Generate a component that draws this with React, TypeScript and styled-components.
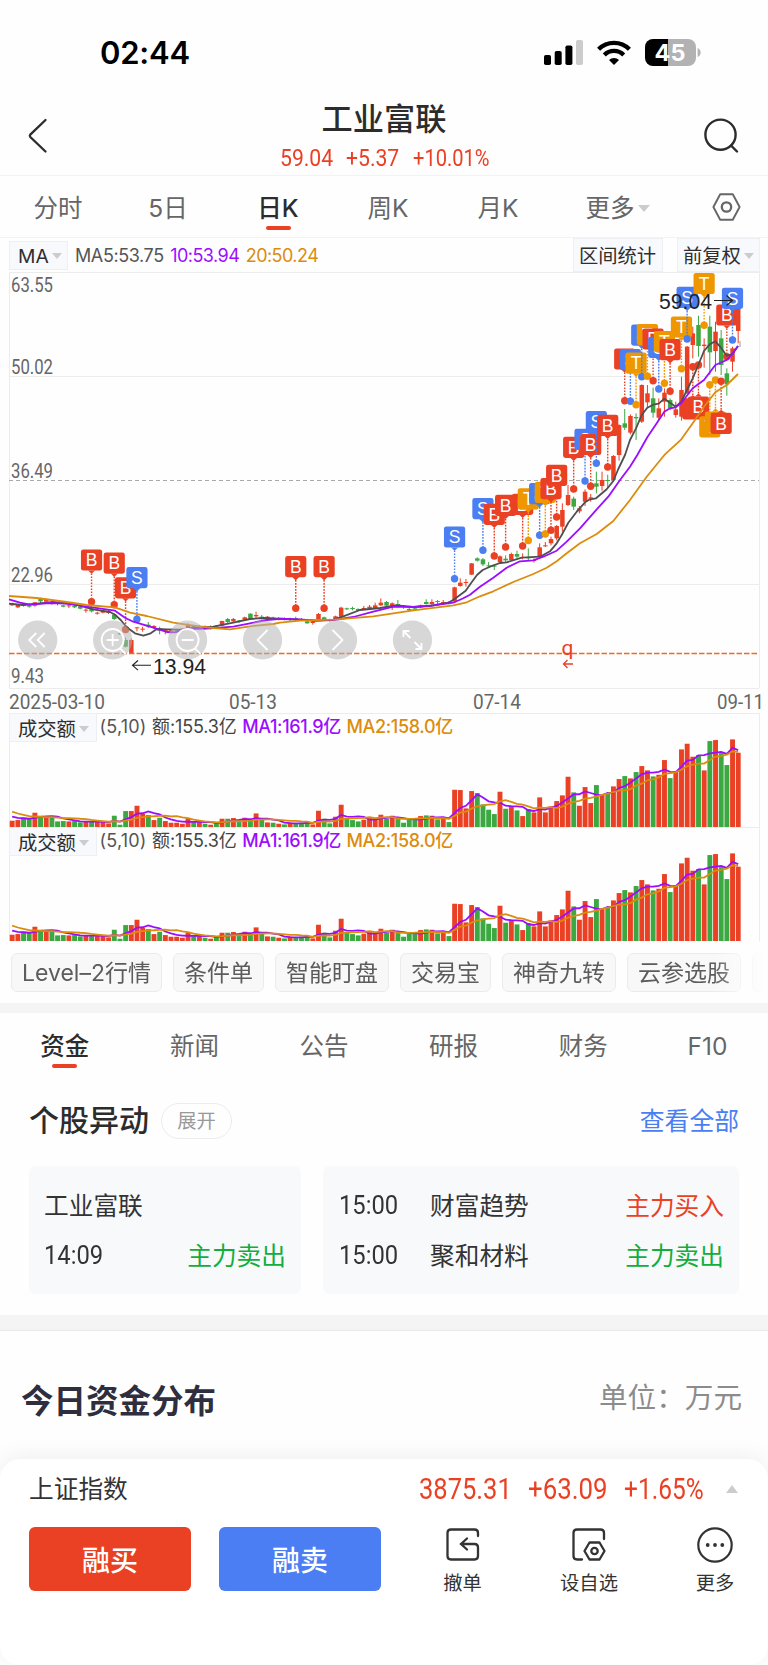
import React from 'react';
import styled, { createGlobalStyle } from 'styled-components';

const RED = '#ea4024';
const GREEN = '#3ca842';
const BLUE = '#4a7ef2';
const AMBER = '#ee9700';
const PURPLE = '#9b0dff';
const GOLD = '#dc8c0c';
const DARK = '#4f4f4f';
const UI = `"Inter", "Noto Sans CJK SC", sans-serif`;
const NUM = `"Roboto", "Noto Sans CJK SC", sans-serif`;

const Global = createGlobalStyle`
  * { box-sizing: border-box; }
  body { margin: 0; background: #fefefe; font-family: ${UI}; color: #333; }
  svg { display: block; }
`;

const Screen = styled.div`
  width: 768px;
  height: 1665px;
  overflow: hidden;
  background: #fefefe;
  display: flex;
  flex-direction: column;
`;

const StatusBar = styled.div`
  height: 104px;
  flex: none;
  display: flex;
  align-items: center;
  justify-content: space-between;
  padding: 0 67px 0 100px;
`;
const Clock = styled.div`
  font-size: 31px;
  font-weight: 600;
  color: #000;
  letter-spacing: -0.2px;
`;
const StatusIcons = styled.div`
  display: flex;
  align-items: center;
  gap: 14px;
`;

const Header = styled.header`
  height: 72px;
  flex: none;
  display: grid;
  grid-template-columns: 120px 1fr 120px;
  border-bottom: 1px solid #f3f3f3;
`;
const BackCell = styled.div`
  padding: 14px 0 0 27px;
`;
const SearchCell = styled.div`
  padding: 13px 0 0 55px;
`;
const TitleBlock = styled.div`
  display: flex;
  flex-direction: column;
  align-items: center;
`;
const StockName = styled.div`
  font-size: 31.2px;
  line-height: 30px;
  font-weight: 500;
  color: #2c2c2c;
`;
const QuoteRow = styled.div`
  display: flex;
  gap: 14px;
  margin-top: 9px;
  height: 30px;
  align-items: center;
  color: ${RED};
`;
const Num = styled.span<{ $w: number; $size: number; $scale: number; $weight?: number }>`
  display: block;
  width: ${(p) => p.$w}px;
  font-family: ${NUM};
  font-size: ${(p) => p.$size}px;
  font-weight: ${(p) => p.$weight ?? 400};
  line-height: 30px;
  white-space: nowrap;
  transform: scaleX(${(p) => p.$scale});
  transform-origin: 0 50%;
`;

const PeriodTabs = styled.nav`
  height: 62px;
  flex: none;
  display: flex;
  padding-left: 3px;
  border-bottom: 1px solid #f3f3f3;
`;
const Tab = styled.div<{ $w: number; $active?: boolean; $top: number; $bar: number }>`
  width: ${(p) => p.$w}px;
  flex: none;
  display: flex;
  flex-direction: column;
  align-items: center;
  font-size: 24.5px;
  line-height: 36px;
  padding-top: ${(p) => p.$top}px;
  font-weight: ${(p) => (p.$active ? 500 : 400)};
  color: ${(p) => (p.$active ? '#2c2c2c' : '#666')};
  &::after {
    content: '';
    width: 25px;
    height: 4px;
    border-radius: 2px;
    margin-top: ${(p) => p.$bar}px;
    background: ${(p) => (p.$active ? RED : 'transparent')};
  }
`;
const TabLabel = styled.span`
  display: flex;
  align-items: center;
  gap: 3px;
`;
const Caret = styled.i<{ $size?: number; $up?: boolean }>`
  width: 0;
  height: 0;
  border: ${(p) => p.$size ?? 5}px solid transparent;
  border-bottom-width: ${(p) => (p.$up ? 8 : 0)}px;
  border-top-width: ${(p) => (p.$up ? 0 : (p.$size ?? 5) + 1)}px;
  border-top-color: ${(p) => (p.$up ? 'transparent' : '#ccc')};
  border-bottom-color: ${(p) => (p.$up ? '#ccc' : 'transparent')};
`;
const SettingsCell = styled.div`
  flex: 1;
  display: flex;
  justify-content: center;
  padding: 17px 0 0 2px;
`;

const IndicatorRow = styled.div`
  height: 34px;
  flex: none;
  display: flex;
  align-items: center;
  padding: 0 8px 0 9px;
`;
const SelectBox = styled.div<{ $w: number; $h: number; $left: number }>`
  width: ${(p) => p.$w}px;
  height: ${(p) => p.$h}px;
  flex: none;
  display: flex;
  align-items: center;
  gap: 3px;
  padding: 2px 0 0 ${(p) => p.$left}px;
  background: #f8f9fd;
  border: 1px solid #eeeff3;
  font-size: 19.3px;
  line-height: 24px;
  white-space: nowrap;
  color: #2e2e2e;
`;
const Legend = styled.div<{ $left: number; $gap: number; $ls: number }>`
  display: flex;
  align-items: baseline;
  gap: ${(p) => p.$gap}px;
  padding: 2px 0 0 ${(p) => p.$left}px;
  flex: 1;
  font-size: 18px;
  line-height: 22px;
  letter-spacing: ${(p) => p.$ls}px;
  white-space: nowrap;
`;
const LegendItem = styled.span<{ $color: string; $medium?: boolean; $ls?: number }>`
  color: ${(p) => p.$color};
  font-weight: ${(p) => (p.$medium ? 500 : 400)};
  ${(p) => (p.$ls !== undefined ? `letter-spacing: ${p.$ls}px;` : '')}
`;
const BoxGap = styled.div`
  width: 14px;
`;

const ChartSvg = styled.svg`
  flex: none;
`;
const VolumePanel = styled.section`
  height: 114px;
  flex: none;
  display: grid;
  & > * { grid-area: 1 / 1; }
`;
const VolumeHeader = styled.div`
  display: flex;
  align-items: flex-start;
  padding-left: 9px;
  z-index: 1;
`;
const LegendSlot = styled.div`
  padding-top: 1px;
`;

const ChipRow = styled.div`
  height: 62px;
  flex: none;
  display: flex;
  gap: 11px;
  padding: 12px 0 0 11px;
  overflow: hidden;
  mask-image: linear-gradient(90deg, #000 715px, transparent 768px);
`;
const Chip = styled.div<{ $w: number }>`
  width: ${(p) => p.$w}px;
  height: 39px;
  flex: none;
  border: 1px solid #ebebeb;
  border-radius: 6px;
  background: #f8f8f8;
  display: flex;
  align-items: center;
  justify-content: center;
  padding-bottom: 3px;
  font-size: 23px;
  white-space: nowrap;
  color: #5c5c5c;
`;
const Band = styled.div<{ $h: number; $line?: boolean }>`
  height: ${(p) => p.$h}px;
  flex: none;
  background: #f4f4f4;
  border-bottom: ${(p) => (p.$line ? '1px solid #e9e9e9' : 'none')};
`;
const InfoTabs = styled.nav`
  height: 76px;
  flex: none;
  display: flex;
`;

const SectionHead = styled.div`
  height: 64px;
  flex: none;
  display: flex;
  align-items: center;
  padding: 0 29px;
`;
const SectionTitle = styled.h2`
  margin: 0;
  padding-bottom: 2px;
  font-size: 30px;
  line-height: 36px;
  font-weight: 500;
  color: #2c2c2c;
`;
const Pill = styled.div`
  width: 71px;
  height: 36px;
  margin: 0 0 1px 12px;
  border: 1px solid #ececec;
  border-radius: 18px;
  display: flex;
  align-items: center;
  justify-content: center;
  padding-bottom: 1px;
  font-size: 19.3px;
  color: #999;
`;
const LinkText = styled.a`
  margin: 0 0 4px auto;
  font-size: 24.8px;
  color: ${BLUE};
`;
const Cards = styled.div`
  height: 162px;
  flex: none;
  display: grid;
  grid-template-columns: 272px 416px;
  grid-template-rows: 128px;
  column-gap: 22px;
  padding: 13px 29px 0;
`;
const Card = styled.div<{ $px: number }>`
  background: #f8f9fb;
  border-radius: 7px;
  padding: 13px 15px 0 ${(p) => p.$px}px;
`;
const CardRow = styled.div`
  height: 50px;
  display: flex;
  align-items: center;
  font-size: 24.7px;
  color: #333;
  & > ${Num} { padding-top: 3px; }
`;
const Move = styled.span<{ $buy?: boolean }>`
  margin-left: auto;
  color: ${(p) => (p.$buy ? RED : '#0fae3d')};
`;
const StockLabel = styled.span`
  margin-left: 33px;
`;

const FlowHead = styled.div`
  height: 128px;
  flex: none;
  display: flex;
  justify-content: space-between;
  padding: 49px 26px 0 21px;
`;
const FlowTitle = styled.h2`
  margin: 0;
  font-size: 32.5px;
  line-height: 44px;
  font-weight: 700;
  color: #2f2e3e;
`;
const Unit = styled.div`
  font-size: 28.6px;
  line-height: 36px;
  color: #8c8c8c;
`;

const Sheet = styled.footer`
  flex: 1;
  border-radius: 20px;
  background: #fff;
  box-shadow: 0 -4px 22px rgba(0, 0, 0, 0.06);
  display: flex;
  flex-direction: column;
`;
const IndexRow = styled.div`
  height: 68px;
  display: flex;
  align-items: center;
  padding: 0 29px 9px 29px;
  font-size: 24.7px;
  color: ${RED};
`;
const IndexName = styled.span`
  width: 390px;
  padding-bottom: 4px;
  color: #333;
`;
const ActionRow = styled.div`
  display: flex;
  padding-left: 29px;
`;
const TradeButton = styled.button<{ $color: string }>`
  width: 162px;
  height: 64px;
  margin-right: 28px;
  flex: none;
  border: 0;
  border-radius: 6px;
  background: ${(p) => p.$color};
  color: #fff;
  font-family: ${UI};
  font-size: 28px;
  font-weight: 500;
`;
const Action = styled.div<{ $w: number }>`
  width: ${(p) => p.$w}px;
  flex: none;
  display: flex;
  flex-direction: column;
  align-items: center;
  font-size: 19.3px;
  line-height: 28px;
  gap: 6px;
  color: #333;
`;

/* ---- chart data: one slot per trading day ---- */
const PITCH = 5.672;
const cx = (i: number) => 12.15 + i * PITCH;

// Turnover bars: height in thirds of a pixel and the day's direction.
const turnover =
  '20R 22R 29G 27G 44R 35G 31R 33G 18G 19G 18R 19G 15G 17R 18G 17R 16R 12R 35G 8G 49G 49R 65R 41R 37G 22R 29G 19R 14R 14R 11R 27R 16G 16R 11G 8R 15G 26R 26G 28R 16G 29R 23G 42R 23G 15R 14G 11R 9G 14R 13G 14G 17G 9R 50R 26G 12G 32R 68R 25G 22G 18G 23R 28R 27R 38R 26G 35R 25G 14G 23G 22G 34R 36G 35R 24G 26R 16G 113R 112R 57R 109R 103G 69G 53G 40G 107R 56G 61R 51G 34R 55G 45R 90R 45R 63R 79R 96R 152R 105G 65R 121R 73R 127G 95R 101G 123R 145R 154G 147R 166G 184R 171R 153G 158R 202R 148G 168R 234R 251R 212R 217G 171R 259G 262R 223G 187G 264R 224R'
    .split(' ')
    .map((t) => ({ h: parseInt(t, 10) / 3, up: t.endsWith('R') }));
const earlier = [75, 70, 65, 55, 45, 38, 36, 34, 32].map((v) => v / 3);

const average = (n: number) => {
  const all = [...earlier, ...turnover.map((t) => t.h)];
  return turnover.map((_, i) => {
    const end = i + earlier.length + 1;
    return all.slice(end - n, end).reduce((a, b) => a + b, 0) / n;
  });
};

// Candles: [slot, body top, body bottom, wick top, wick bottom, rising]
type Candle = [number, number, number, number, number, 0 | 1];
const shift = (base: number, rows: Candle[]): Candle[] =>
  rows.map(([i, a, b, c, d, u]) => [i, base + a / 3, base + b / 3, base + c / 3, base + d / 3, u]);

const candles: Candle[] = [
  ...shift(520, [
    [0, 250, 256, 248, 258, 1], [1, 255, 262, 252, 264, 1], [2, 255, 258, 253, 260, 0], [3, 256, 260, 252, 263, 0],
    [4, 247, 257, 246, 260, 1], [5, 236, 244, 233, 250, 0], [6, 238, 245, 236, 247, 1], [7, 246, 250, 244, 254, 1],
    [8, 248, 252, 246, 256, 1], [9, 256, 260, 254, 262, 0], [10, 256, 259, 252, 264, 1], [11, 257, 262, 255, 264, 0],
    [12, 260, 266, 258, 268, 0], [13, 269, 272, 265, 278, 1], [14, 266, 274, 258, 277, 0], [15, 278, 281, 275, 284, 1],
    [16, 273, 278, 270, 280, 1], [17, 274, 279, 270, 282, 1], [18, 284, 297, 280, 300, 0], [19, 340, 343, 338, 344, 0],
    [20, 360, 380, 353, 382, 0], [21, 360, 400, 356, 401, 1], [22, 322, 325, 321, 334, 1], [23, 326, 329, 320, 335, 1],
    [24, 314, 320, 306, 324, 0], [25, 318, 323, 315, 326, 1], [26, 325, 332, 320, 343, 0], [27, 330, 333, 328, 343, 1],
    [28, 331, 334, 328, 340, 1], [29, 331, 335, 328, 338, 0], [30, 329, 333, 326, 336, 1], [31, 314, 327, 310, 328, 1],
    [32, 316, 322, 314, 326, 0], [33, 318, 324, 315, 326, 1], [34, 320, 324, 316, 328, 0], [35, 320, 326, 316, 328, 1],
    [36, 320, 324, 317, 326, 0], [37, 303, 317, 302, 319, 1], [38, 297, 306, 294, 312, 0], [39, 297, 304, 294, 308, 1],
    [40, 302, 306, 300, 309, 0], [41, 292, 299, 290, 301, 1], [42, 281, 297, 280, 299, 0], [43, 285, 289, 275, 297, 1],
    [44, 290, 296, 285, 298, 0], [45, 290, 296, 288, 298, 1], [46, 293, 297, 290, 300, 0], [47, 294, 298, 291, 301, 1],
    [48, 295, 299, 292, 301, 1], [49, 295, 299, 293, 303, 0], [50, 295, 300, 290, 303, 0], [51, 297, 300, 294, 302, 1],
    [52, 304, 310, 303, 311, 0], [53, 304, 309, 302, 314, 1], [54, 282, 299, 279, 300, 1], [55, 292, 298, 290, 300, 0],
    [56, 298, 302, 296, 305, 0], [57, 289, 298, 287, 300, 1], [58, 263, 290, 260, 292, 1], [59, 265, 268, 263, 270, 0],
    [60, 264, 267, 260, 271, 0], [61, 267, 272, 265, 273, 0], [62, 264, 268, 258, 270, 1], [63, 260, 266, 255, 270, 1],
    [64, 256, 264, 248, 266, 1], [65, 248, 256, 235, 258, 1], [66, 246, 257, 243, 260, 0], [67, 250, 262, 247, 270, 1],
    [68, 252, 259, 240, 262, 0], [69, 257, 261, 255, 266, 1], [70, 267, 271, 262, 274, 0], [71, 265, 269, 260, 273, 0],
    [72, 256, 262, 254, 264, 1], [73, 246, 252, 238, 254, 0], [74, 246, 252, 238, 256, 1], [75, 243, 246, 240, 254, 0],
    [76, 246, 249, 240, 254, 1], [77, 246, 250, 243, 253, 0], [78, 202, 245, 200, 248, 1], [79, 188, 198, 175, 200, 1],
    [80, 186, 189, 177, 200, 1], [81, 130, 164, 129, 165, 1], [82, 115, 122, 112, 125, 0], [83, 118, 133, 114, 138, 0],
    [84, 136, 139, 126, 144, 0], [85, 137, 140, 132, 150, 0], [86, 109, 127, 106, 130, 1], [87, 116, 121, 106, 126, 0],
    [88, 102, 120, 98, 122, 1], [89, 102, 110, 92, 115, 0], [90, 111, 114, 100, 118, 1], [91, 112, 115, 85, 120, 0],
    [92, 120, 123, 115, 128, 1], [93, 82, 108, 70, 112, 1], [94, 76, 79, 66, 81, 1], [95, 57, 70, 50, 76, 1],
    [96, 18, 55, 15, 61, 1],
  ]),
  ...shift(400, [
    [97, 330, 380, 310, 395, 1], [98, 285, 315, 255, 318, 1], [99, 296, 320, 290, 330, 0], [100, 325, 334, 318, 340, 1],
    [101, 275, 305, 268, 318, 1], [102, 292, 296, 282, 305, 1], [103, 250, 260, 215, 280, 0], [104, 240, 258, 215, 272, 1],
    [105, 240, 243, 224, 264, 0], [106, 168, 240, 165, 242, 1], [107, 75, 165, 73, 182, 1],
  ]),
  ...shift(265, [
    [108, 475, 488, 432, 495, 0], [109, 453, 503, 448, 508, 1], [110, 456, 460, 445, 525, 0], [111, 360, 470, 358, 474, 1],
    [112, 385, 412, 360, 430, 1], [113, 400, 443, 368, 458, 0], [114, 430, 458, 400, 465, 1], [115, 383, 410, 370, 455, 1],
    [116, 405, 430, 400, 435, 0], [117, 433, 450, 410, 458, 1], [118, 375, 455, 335, 467, 1], [119, 245, 385, 243, 387, 1],
    [120, 205, 240, 185, 280, 1], [121, 180, 243, 152, 275, 0], [122, 239, 243, 220, 308, 1], [123, 185, 262, 152, 330, 0],
    [124, 200, 258, 170, 320, 1], [125, 220, 300, 195, 330, 0], [126, 325, 358, 310, 392, 0], [127, 250, 290, 245, 320, 1],
    [128, 128, 198, 126, 235, 1],
  ]),
];

// Price averages, in chart coordinates
type Pt = [number, number];
const pts = (ox: number, oy: number, list: Pt[]): Pt[] => list.map(([x, y]) => [ox + x / 3, oy + y / 3]);
const ma5: Pt[] = [
  ...pts(0, 520, [[27, 251], [70, 255], [120, 250], [160, 246], [220, 252], [280, 268], [330, 276], [345, 284], [362, 300], [380, 322], [405, 340], [430, 347], [450, 341], [470, 327], [500, 328], [540, 329], [580, 323], [640, 320], [700, 308], [750, 297], [790, 294], [850, 297]]),
  ...pts(280, 520, [[50, 299], [110, 302], [160, 299], [190, 289], [240, 270], [300, 264], [350, 256], [400, 261], [450, 258], [505, 248], [523, 238], [557, 212], [574, 188], [591, 165], [608, 150], [630, 140], [660, 129], [680, 127], [725, 113], [780, 110], [810, 94], [830, 70]]),
  ...pts(430, 400, [[395, 405], [415, 368], [440, 335], [465, 307], [480, 298], [498, 295], [530, 268], [550, 243], [565, 207], [585, 165], [600, 120]]),
  ...pts(590, 265, [[138, 490], [155, 450], [172, 428], [190, 419], [206, 416], [223, 401], [240, 413], [257, 425], [274, 410], [291, 375], [308, 340], [325, 300], [342, 258], [359, 238], [376, 229], [393, 248], [410, 272], [427, 268], [444, 243]]),
];
const ma10: Pt[] = [
  ...pts(0, 520, [[27, 238], [60, 248], [90, 254], [150, 249], [200, 251], [260, 260], [345, 272], [375, 293], [400, 305], [450, 320], [500, 336], [525, 337], [555, 327], [620, 326], [700, 320], [750, 310], [800, 300], [850, 296]]),
  ...pts(280, 520, [[0, 296], [60, 298], [110, 302], [160, 300], [220, 291], [280, 275], [340, 260], [400, 261], [460, 256], [520, 248], [550, 235], [570, 224], [600, 200], [640, 173], [680, 143], [720, 124], [760, 121], [790, 110], [830, 92]]),
  ...pts(430, 400, [[410, 425], [450, 385], [500, 328], [535, 290], [570, 240], [600, 200]]),
  ...pts(590, 265, [[142, 570], [172, 517], [200, 475], [223, 440], [240, 430], [257, 427], [274, 414], [308, 370], [342, 345], [376, 300], [410, 285], [427, 267], [444, 243]]),
];
const ma20: Pt[] = [
  ...pts(0, 520, [[27, 228], [110, 234], [200, 246], [260, 255], [345, 262], [390, 278], [440, 288], [520, 308], [580, 317], [640, 324], [690, 328], [750, 319], [820, 312]]),
  ...pts(280, 520, [[0, 308], [60, 302], [160, 299], [280, 289], [400, 271], [520, 256], [560, 247], [600, 229], [640, 214], [700, 186], [760, 162], [800, 143], [830, 124], [860, 100]]),
  ...pts(430, 400, [[450, 430], [500, 402], [550, 363], [600, 300]]),
  ...pts(590, 265, [[170, 635], [225, 568], [274, 523], [308, 475], [342, 425], [376, 382], [410, 360], [444, 327]]),
];
const line = (list: Pt[]) => list.map(([x, y]) => `${x.toFixed(1)},${y.toFixed(1)}`).join(' ');

// Trade markers: [slot, letter, dot y, badge below the dot]
type Mark = [number, 'B' | 'S' | 'T', number, boolean?];
const marks: Mark[] = [
  [14, 'B', 601.7], [18, 'B', 604.8], [20, 'B', 629.5], [22, 'S', 619.3], [50, 'B', 608.3], [55, 'B', 608.3],
  [78, 'S', 578.7], [83, 'S', 550.3], [85, 'B', 556], [87, 'B', 547], [90, 'B', 546], [91, 'T', 540.5],
  [93, 'S', 535.3], [94, 'T', 534], [95, 'B', 530.3], [96, 'B', 517], [99, 'B', 489], [101, 'S', 481], [102, 'B', 486.2],
  [103, 'S', 463.3], [105, 'B', 467], [108, 'B', 400.7], [109, 'S', 401.3], [110, 'T', 404.8], [111, 'S', 376.8],
  [112, 'T', 376.2], [113, 'B', 380.7], [114, 'S', 389], [115, 'T', 383.3], [116, 'B', 391.3], [118, 'T', 368.7],
  [119, 'S', 339], [120, 'B', 366.7, true], [121, 'B', 365, true], [122, 'T', 325.2], [123, 'T', 384.7, true],
  [124, 'T', 380, true], [125, 'B', 381.3, true], [126, 'B', 356.7], [127, 'S', 340],
];
const markColor = { B: RED, S: BLUE, T: AMBER };

const Marker = ({ m: [i, letter, y, below] }: { m: Mark }) => {
  const x = cx(i);
  const c = markColor[letter];
  const top = below ? y + 31.5 : y - 52.3;
  return (
    <g>
      <line x1={x} x2={x} y1={below ? top : top + 24} y2={y} stroke={c} strokeWidth={1.4} strokeDasharray="1.7 1.3" />
      <circle cx={x} cy={y} r={3.7} fill={c} />
      <rect x={x - 10.6} y={top} width={21.2} height={21.2} rx={2.4} fill={c} />
      <path d={below ? `M${x - 3.5} ${top}l3.5-3 3.5 3z` : `M${x - 3.5} ${top + 21}l3.5 3.4 3.5-3.4z`} fill={c} />
      <text x={x} y={top + 16.8} fill="#fff" fontSize={17.5} textAnchor="middle" fontFamily="Liberation Sans, sans-serif">
        {letter}
      </text>
    </g>
  );
};

const Axis = ({ x, y, w, children }: { x: number; y: number; w: number; children: string }) => (
  <text x={x} y={y} textLength={w} lengthAdjust="spacingAndGlyphs" fontFamily="Roboto, sans-serif" fontSize={20} fill="#666">
    {children}
  </text>
);

const controls = [
  'M-1.5-7l-7 7 7 7M7-7l-7 7 7 7',
  'M-6 0h12M0-6v12M7 8l6 6M-11 0a11 11 0 1 0 22 0a11 11 0 1 0-22 0',
  'M-6 0h12M7 8l6 6M-11 0a11 11 0 1 0 22 0a11 11 0 1 0-22 0',
  'M5-10l-10 10 10 10',
  'M-5-10l10 10-10 10',
  'M-9-3v-6h6M-9-9l7 7M9 3v6h-6M9 9l-7-7',
];

const PriceChart = () => (
  <ChartSvg width={768} height={441} viewBox="0 272 768 441">
    <g fill="none" stroke="#ececec" strokeWidth={1}>
      <path d="M9 272.5H759M9 376.5H759M9 584.5H759M9 688.5H759M9.5 272V688M759.5 272V688" />
      <path d="M9 480.5H759" stroke="#aaa" strokeDasharray="4 3" />
    </g>
    <g>
      {candles.map(([i, a, b, c, d, up]) => (
        <g key={i} fill={up ? RED : GREEN}>
          <rect x={cx(i) - 0.5} y={c} width={1} height={d - c} />
          <rect x={cx(i) - 2.2} y={a} width={4.5} height={b - a} />
        </g>
      ))}
    </g>
    <rect x={739} y={341} width={2} height={6} fill="#ccc" />
    <line x1={9} x2={759} y1={653.5} y2={653.5} stroke="#f2691c" strokeWidth={1.5} strokeDasharray="5.5 2" />
    <g>
      {marks.map((m) => (
        <Marker key={m[0]} m={m} />
      ))}
    </g>
    <g fill="none" strokeWidth={1.8} strokeLinejoin="round">
      <polyline points={line(ma5)} stroke={DARK} />
      <polyline points={line(ma10)} stroke={PURPLE} />
      <polyline points={line(ma20)} stroke={GOLD} />
    </g>
    {controls.map((d, k) => (
      <g key={k} transform={`translate(${37.7 + k * 74.95} 640)`}>
        <circle r={19.6} fill="#b4b4b4" opacity={0.53} />
        <path d={d} fill="none" stroke="#fff" strokeWidth={1.8} />
      </g>
    ))}
    <Axis x={11} y={291.7} w={42}>63.55</Axis>
    <Axis x={11} y={374.4} w={42}>50.02</Axis>
    <Axis x={11} y={478.4} w={42}>36.49</Axis>
    <Axis x={11} y={582.2} w={42}>22.96</Axis>
    <Axis x={11} y={682.7} w={33}>9.43</Axis>
    <Axis x={9} y={708.6} w={96}>2025-03-10</Axis>
    <Axis x={229} y={708.6} w={48}>05-13</Axis>
    <Axis x={473} y={708.6} w={48}>07-14</Axis>
    <Axis x={717} y={708.6} w={47}>09-11</Axis>
    <g fontFamily="Liberation Sans, sans-serif" fontSize={21.2} fill="#222">
      <text x={659} y={309}>59.04</text>
      <text x={153} y={673.6}>13.94</text>
      <path d="M714 300.5h18M726.5 295.5l6 5-6 5M151 665.3h-18M138 660.5l-5.5 4.8 5.5 4.8" fill="none" stroke="#222" strokeWidth={1.1} />
    </g>
    <text x={561.5} y={655} fontFamily="Roboto, sans-serif" fontSize={21} fill={RED}>q</text>
    <path d="M573 664h-9.5M567.5 660l-4 4 4 4" fill="none" stroke={RED} strokeWidth={1.3} />
  </ChartSvg>
);

const TurnoverPanel = () => (
  <VolumePanel>
    <ChartSvg width={768} height={114} viewBox="0 0 768 114">
      <path d="M9 .5H759M9.5 0V114M759.5 0V114" stroke="#ececec" fill="none" />
      {turnover.map((t, i) => (
        <rect key={i} x={cx(i) - 2.4} y={114.4 - t.h} width={4.9} height={t.h} fill={t.up ? RED : GREEN} />
      ))}
      <g fill="none" strokeWidth={1.8}>
        <polyline points={average(5).map((h, i) => `${cx(i)},${114.4 - h}`).join(' ')} stroke={PURPLE} />
        <polyline points={average(10).map((h, i) => `${cx(i)},${114.4 - h}`).join(' ')} stroke={GOLD} />
      </g>
    </ChartSvg>
    <VolumeHeader>
      <SelectBox $w={88} $h={29} $left={8}>
        成交额
        <Caret />
      </SelectBox>
      <LegendSlot>
        <Legend $left={2.5} $gap={5.5} $ls={-0.35}>
          <LegendItem $color="#555" $ls={0.2}>(5,10)</LegendItem>
          <LegendItem $color="#444" $ls={-0.15}>额:155.3亿</LegendItem>
          <LegendItem $color={PURPLE} $medium>MA1:161.9亿</LegendItem>
          <LegendItem $color={GOLD} $medium>MA2:158.0亿</LegendItem>
        </Legend>
      </LegendSlot>
    </VolumeHeader>
  </VolumePanel>
);

const chips: [string, number][] = [
  ['Level–2行情', 151], ['条件单', 91], ['智能盯盘', 114], ['交易宝', 91], ['神奇九转', 114], ['云参选股', 114], ['金', 91],
];

export default function App() {
  return (
    <Screen>
      <Global />
      <StatusBar>
        <Clock>02:44</Clock>
        <StatusIcons>
          <svg width={39} height={25} viewBox="0 0 39 25">
            <rect x={0} y={15} width={7} height={10} rx={1.8} />
            <rect x={10.7} y={11} width={7} height={14} rx={1.8} />
            <rect x={21.4} y={5.5} width={7} height={19.5} rx={1.8} />
            <rect x={32} y={0} width={7} height={25} rx={1.8} fill="#ccc" />
          </svg>
          <svg width={34} height={25} viewBox="0 0 34 25">
            <g fill="none" stroke="#000" strokeWidth={4.3}>
              <path d="M1.6 9.2a21.8 21.8 0 0 1 30.8 0" />
              <path d="M7.3 15a13.7 13.7 0 0 1 19.4 0" />
            </g>
            <path d="M17 25l-5-5a7 7 0 0 1 10 0z" />
          </svg>
          <svg width={56} height={27} viewBox="0 0 56 27">
            <path d="M8 0H23V27H8a8 8 0 0 1-8-8V8a8 8 0 0 1 8-8z" />
            <path d="M23 0H43a8 8 0 0 1 8 8V19a8 8 0 0 1-8 8H23z" fill="#b2b2b2" />
            <path d="M52.6 9q3 1.5 3 4.5t-3 4.5z" fill="#b2b2b2" />
            <text x={25} y={22} textAnchor="middle" fill="#fff" fontFamily="Inter, sans-serif" fontWeight={700} fontSize={23.5}>45</text>
          </svg>
        </StatusIcons>
      </StatusBar>

      <Header>
        <BackCell>
          <svg width={22} height={36} viewBox="0 0 22 36" fill="none" stroke="#2c2c2c" strokeWidth={2.3} strokeLinecap="round">
            <path d="M18.5 2L3.3 16.6q-1 1.2 0 2.4L18.5 33.5" />
          </svg>
        </BackCell>
        <TitleBlock>
          <StockName>工业富联</StockName>
          <QuoteRow>
            <Num $w={52} $size={23.5} $scale={0.9}>59.04</Num>
            <Num $w={53} $size={23.5} $scale={0.9}>+5.37</Num>
            <Num $w={76} $size={23.5} $scale={0.855}>+10.01%</Num>
          </QuoteRow>
        </TitleBlock>
        <SearchCell>
          <svg width={37} height={37} viewBox="0 0 37 37" fill="none" stroke="#2c2c2c" strokeWidth={2.4} strokeLinecap="round">
            <circle cx={17.5} cy={17.7} r={15.1} />
            <path d="M28 28.5l6 6" />
          </svg>
        </SearchCell>
      </Header>

      <PeriodTabs>
        {['分时', '5日', '日K', '周K', '月K'].map((t) => (
          <Tab key={t} $w={110} $active={t === '日K'} $top={14} $bar={0}>{t}</Tab>
        ))}
        <Tab $w={129} $top={14} $bar={0}>
          <TabLabel>更多<Caret $size={6.5} /></TabLabel>
        </Tab>
        <SettingsCell>
          <svg width={29} height={28} viewBox="0 0 29 28" fill="none" stroke="#666" strokeWidth={1.9} strokeLinejoin="round">
            <path d="M8.2 1.3H20.8L27.6 14 20.8 26.7H8.2L1.4 14z" />
            <circle cx={14.5} cy={14} r={4.7} strokeWidth={2.3} />
          </svg>
        </SettingsCell>
      </PeriodTabs>

      <IndicatorRow>
        <SelectBox $w={59} $h={29} $left={8}>
          MA
          <Caret />
        </SelectBox>
        <Legend $left={7} $gap={6.5} $ls={-0.55}>
          <LegendItem $color="#555" $ls={-0.4}>MA5:53.75</LegendItem>
          <LegendItem $color={PURPLE}>10:53.94</LegendItem>
          <LegendItem $color={GOLD}>20:50.24</LegendItem>
        </Legend>
        <SelectBox $w={90} $h={34} $left={5}>区间统计</SelectBox>
        <BoxGap />
        <SelectBox $w={83} $h={34} $left={5}>
          前复权
          <Caret />
        </SelectBox>
      </IndicatorRow>

      <PriceChart />
      <TurnoverPanel />
      <TurnoverPanel />

      <ChipRow>
        {chips.map(([label, w]) => (
          <Chip key={label} $w={w}>{label}</Chip>
        ))}
      </ChipRow>
      <Band $h={10} />

      <InfoTabs>
        {['资金', '新闻', '公告', '研报', '财务'].map((t) => (
          <Tab key={t} $w={129.6} $active={t === '资金'} $top={15} $bar={0}>{t}</Tab>
        ))}
        <Tab $w={119} $top={15} $bar={0}>F10</Tab>
      </InfoTabs>
      <SectionHead>
        <SectionTitle>个股异动</SectionTitle>
        <Pill>展开</Pill>
        <LinkText>查看全部</LinkText>
      </SectionHead>
      <Cards>
        <Card $px={15}>
          <CardRow>工业富联</CardRow>
          <CardRow>
            <Num $w={60} $size={25} $scale={0.95}>14:09</Num>
            <Move>主力卖出</Move>
          </CardRow>
        </Card>
        <Card $px={16}>
          <CardRow>
            <Num $w={58} $size={25} $scale={0.95}>15:00</Num>
            <StockLabel>财富趋势</StockLabel>
            <Move $buy>主力买入</Move>
          </CardRow>
          <CardRow>
            <Num $w={58} $size={25} $scale={0.95}>15:00</Num>
            <StockLabel>聚和材料</StockLabel>
            <Move>主力卖出</Move>
          </CardRow>
        </Card>
      </Cards>
      <Band $h={16} $line />

      <FlowHead>
        <FlowTitle>今日资金分布</FlowTitle>
        <Unit>单位：万元</Unit>
      </FlowHead>

      <Sheet>
        <IndexRow>
          <IndexName>上证指数</IndexName>
          <Num $w={109} $size={29} $scale={0.88}>3875.31</Num>
          <Num $w={96} $size={29} $scale={0.89}>+63.09</Num>
          <Num $w={102} $size={29} $scale={0.845}>+1.65%</Num>
          <Caret $size={6.5} $up />
        </IndexRow>
        <ActionRow>
          <TradeButton $color={RED}>融买</TradeButton>
          <TradeButton $color={BLUE}>融卖</TradeButton>
          <Action $w={107}>
            <svg width={36} height={36} viewBox="0 0 36 36" fill="none" stroke="#333" strokeWidth={2.3} strokeLinecap="round">
              <path d="M33 9V6q0-3.5-3.5-3.5H6Q2.5 2.5 2.5 6V29q0 3.5 3.5 3.5H29.5Q33 32.5 33 29V20.5q0-3.5-3.5-3.5H16M22 11.5l-6 5.5 6 5.5" />
            </svg>
            撤单
          </Action>
          <Action $w={146}>
            <svg width={36} height={36} viewBox="0 0 36 36" fill="none" stroke="#333" strokeWidth={2.3} strokeLinecap="round" strokeLinejoin="round">
              <path d="M33 12V6q0-3.5-3.5-3.5H6Q2.5 2.5 2.5 6V29q0 3.5 3.5 3.5h5" />
              <path d="M18.5 15.5H28.5L33.5 24 28.5 32.5H18.5L13.5 24z" />
              <circle cx={23.5} cy={24} r={3.2} />
            </svg>
            设自选
          </Action>
          <Action $w={106}>
            <svg width={38} height={36} viewBox="0 0 38 36" fill="none" stroke="#333" strokeWidth={2.2}>
              <circle cx={19} cy={18} r={16.7} />
              <g fill="#333" stroke="none">
                <circle cx={11.7} cy={18} r={1.9} />
                <circle cx={19} cy={18} r={1.9} />
                <circle cx={26.3} cy={18} r={1.9} />
              </g>
            </svg>
            更多
          </Action>
        </ActionRow>
      </Sheet>
    </Screen>
  );
}
